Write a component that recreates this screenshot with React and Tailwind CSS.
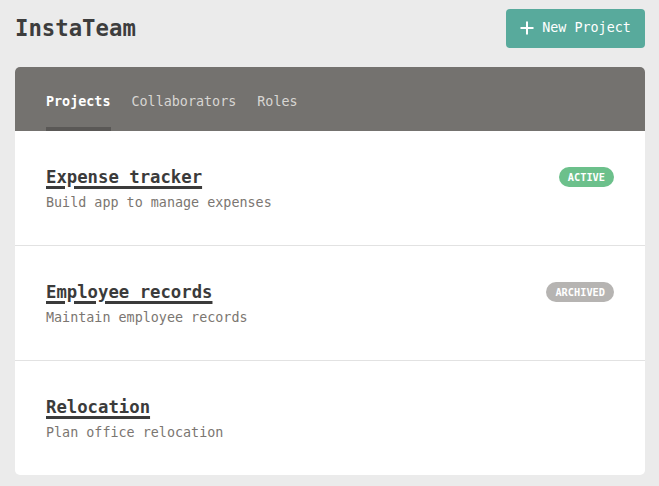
import React from 'react'

export default function App() {
  const projects = [
    { name: 'Expense tracker', desc: 'Build app to manage expenses', status: 'ACTIVE' },
    { name: 'Employee records', desc: 'Maintain employee records', status: 'ARCHIVED' },
    { name: 'Relocation', desc: 'Plan office relocation', status: null }
  ]
  const tabs = ['Projects', 'Collaborators', 'Roles']

  return (
    <div className="min-h-[486px] bg-[#ebebeb] px-[14px] pt-[9px] pb-[11px] font-['DejaVu_Sans_Mono',monospace]">
      {/* Header */}
      <div className="flex items-center justify-between h-[39px] mb-[19px] pl-[1px]">
        <h1 className="text-[22.3px] font-bold text-[#3d3d3d] leading-none">InstaTeam</h1>
        <button className="flex items-center gap-[8px] h-[39px] w-[139px] justify-center rounded-[4px] bg-[#58aa9c] text-white text-[13.4px]">
          <svg width="14" height="14" viewBox="0 0 14 14" className="mt-[-2px]">
            <path d="M7 0.5v13M0.5 7h13" stroke="white" strokeWidth="2" />
          </svg>
          New Project
        </button>
      </div>

      {/* Card */}
      <div className="bg-white rounded-[5px] overflow-hidden ml-[1px]">
        <div className="bg-[#74726f] h-[64px] flex items-end px-[31px] gap-[21px]">
          {tabs.map((t, i) => (
            <div
              key={t}
              className={
                i === 0
                  ? 'h-[50px] pt-[14px] border-b-[4px] border-[#5a5856] text-white font-bold text-[13.4px] leading-none'
                  : 'h-[50px] pt-[14px] text-[#d8d6d3] text-[13.4px] leading-none'
              }
            >
              {t}
            </div>
          ))}
        </div>
        {projects.map((p, i) => (
          <div
            key={p.name}
            className={
              'flex justify-between px-[31px] pt-[38px] ' +
              (i < projects.length - 1 ? 'h-[115px] border-b border-[#e2e2e2]' : 'h-[114px]')
            }
          >
            <div>
              <div className="text-[17.3px] font-bold text-[#3b3b3b] underline decoration-[3px] underline-offset-[3px] leading-none">
                {p.name}
              </div>
              <div className="mt-[10px] text-[13.4px] text-[#7b7671] leading-none">{p.desc}</div>
            </div>
            {p.status && (
              <div
                className={
                  'h-[20px] mt-[-2px] px-[9px] rounded-full text-white font-bold text-[10.3px] flex items-center leading-none ' +
                  (p.status === 'ACTIVE' ? 'bg-[#6cc08b]' : 'bg-[#b6b4b2]')
                }
              >
                {p.status}
              </div>
            )}
          </div>
        ))}
      </div>
    </div>
  )
}
